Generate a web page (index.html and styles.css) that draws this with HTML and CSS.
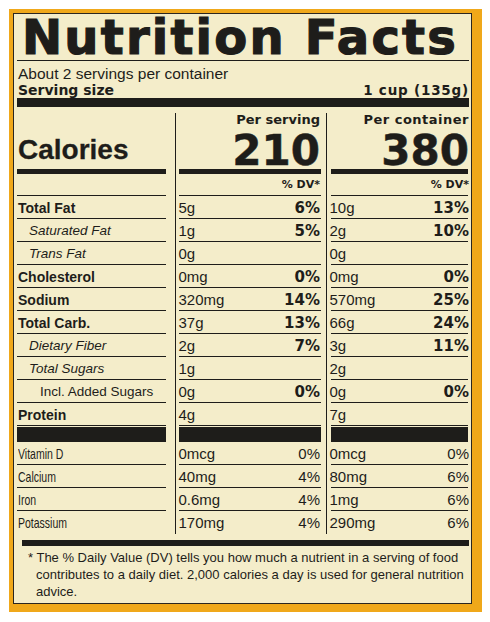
FILE: index.html
```html
<!DOCTYPE html>
<html lang="en">
<head>
    <meta charset="UTF-8">
    <meta name="viewport" content="width=device-width, initial-scale=1.0">
    <title>Nutrition Facts</title>
    <link rel="stylesheet" href="styles.css">
</head>
<body>
    <div class="bag">
        <div class="label">
            <h1 class="title">Nutrition Facts</h1>
            <p class="servings">About 2 servings per container</p>
            <div class="size-row">
                <b>Serving size</b>
                <b>1 cup (135g)</b>
            </div>
            <div class="bar-thick"></div>

            <div class="facts">
                <!-- header -->
                <div class="c l hd"><b class="cal">Calories</b></div>
                <div class="c m hd"><b class="per">Per serving</b><b class="kcal">210</b></div>
                <div class="c r hd"><b class="per">Per container</b><b class="kcal">380</b></div>

                <div class="c l"></div>
                <div class="c m dv"><b>% DV*</b></div>
                <div class="c r dv"><b>% DV*</b></div>

                <div class="c l"><b>Total Fat</b></div>
                <div class="c m"><span>5g</span><b>6%</b></div>
                <div class="c r"><span>10g</span><b>13%</b></div>

                <div class="c l sub"><i>Saturated Fat</i></div>
                <div class="c m"><span>1g</span><b>5%</b></div>
                <div class="c r"><span>2g</span><b>10%</b></div>

                <div class="c l sub"><i>Trans Fat</i></div>
                <div class="c m"><span>0g</span></div>
                <div class="c r"><span>0g</span></div>

                <div class="c l"><b>Cholesterol</b></div>
                <div class="c m"><span>0mg</span><b>0%</b></div>
                <div class="c r"><span>0mg</span><b>0%</b></div>

                <div class="c l"><b>Sodium</b></div>
                <div class="c m"><span>320mg</span><b>14%</b></div>
                <div class="c r"><span>570mg</span><b>25%</b></div>

                <div class="c l"><b>Total Carb.</b></div>
                <div class="c m"><span>37g</span><b>13%</b></div>
                <div class="c r"><span>66g</span><b>24%</b></div>

                <div class="c l sub"><i>Dietary Fiber</i></div>
                <div class="c m"><span>2g</span><b>7%</b></div>
                <div class="c r"><span>3g</span><b>11%</b></div>

                <div class="c l sub"><i>Total Sugars</i></div>
                <div class="c m"><span>1g</span></div>
                <div class="c r"><span>2g</span></div>

                <div class="c l sub2"><span>Incl. Added Sugars</span></div>
                <div class="c m"><span>0g</span><b>0%</b></div>
                <div class="c r"><span>0g</span><b>0%</b></div>

                <div class="c l"><b>Protein</b></div>
                <div class="c m"><span>4g</span></div>
                <div class="c r"><span>7g</span></div>

                <div class="c l bar"></div>
                <div class="c m bar"></div>
                <div class="c r bar"></div>

                <div class="c l"><span class="thin">Vitamin D</span></div>
                <div class="c m"><span>0mcg</span><span>0%</span></div>
                <div class="c r"><span>0mcg</span><span>0%</span></div>

                <div class="c l"><span class="thin">Calcium</span></div>
                <div class="c m"><span>40mg</span><span>4%</span></div>
                <div class="c r"><span>80mg</span><span>6%</span></div>

                <div class="c l"><span class="thin">Iron</span></div>
                <div class="c m"><span>0.6mg</span><span>4%</span></div>
                <div class="c r"><span>1mg</span><span>6%</span></div>

                <div class="c l last"><span class="thin">Potassium</span></div>
                <div class="c m last"><span>170mg</span><span>4%</span></div>
                <div class="c r last"><span>290mg</span><span>6%</span></div>
            </div>

            <div class="rule"></div>
            <p class="note">* The % Daily Value (DV) tells you how much a nutrient in a serving of food<br>contributes to a daily diet. 2,000 calories a day is used for general nutrition<br>advice.</p>
        </div>
    </div>
</body>
</html>
```

FILE: styles.css
```css
:root {
    --ink: #1e1d1a;
    --cream: #f4edca;
    --orange: #f0a81a;
}

* {
    margin: 0;
    padding: 0;
    box-sizing: border-box;
}

body {
    background-color: #fff;
    font-family: "Liberation Sans", Arial, sans-serif;
    color: var(--ink);
}

.bag {
    width: 473px;
    height: 603px;
    margin: 9px 0 0 9px;
    padding: 4px 10px 8px 4px;
    background-color: var(--orange);
}

.label {
    height: 100%;
    background-color: var(--cream);
    border: 1.5px solid #2a2620;
    padding: 0 2px 0 3px;
    display: flex;
    flex-direction: column;
}

.title {
    font-family: "DejaVu Sans", sans-serif;
    font-weight: bold;
    font-size: 48px;
    line-height: 46px;
    letter-spacing: 2.2px;
    -webkit-text-stroke: 1.2px var(--ink);
    padding-left: 5px;
    border-bottom: 1.5px solid var(--ink);
    white-space: nowrap;
}

.servings {
    font-size: 15.5px;
    line-height: 17px;
    margin-top: 4px;
    padding-left: 1px;
}

.size-row {
    display: flex;
    justify-content: space-between;
    line-height: 16px;
    padding-left: 1px;
    font-family: "DejaVu Sans", sans-serif;
    font-size: 14px;
}

.size-row b:last-child {
    font-size: 13.5px;
    letter-spacing: 0.8px;
}

.bar-thick {
    height: 9px;
    background-color: var(--ink);
}

/* table */
.facts {
    display: grid;
    grid-template-columns: 158px 151px 1fr;
    grid-template-rows: 61px 22px repeat(10, 23px) 16px repeat(4, 23px);
    margin-top: 6px;
}

.c {
    display: flex;
    justify-content: space-between;
    align-items: flex-end;
    padding-bottom: 2px;
    font-size: 15px;
    line-height: 18px;
    white-space: nowrap;
    background-image: linear-gradient(var(--ink), var(--ink));
    background-repeat: no-repeat;
    background-size: calc(100% - var(--w)) var(--t, 1.5px);
    background-position: var(--x) 100%;
}

.c b {
    font-family: "DejaVu Sans", sans-serif;
}

.l {
    --w: 9px;
    --x: 0px;
    padding-left: 1px;
    font-size: 14px;
}

.m {
    --w: 8px;
    --x: 3px;
    border-left: 1.5px solid var(--ink);
    padding: 0 6px 2px 2.5px;
}

.r {
    --w: 5px;
    --x: 4px;
    border-left: 1.5px solid var(--ink);
    padding: 0 0 2px 2.5px;
}

.l b {
    font-family: "Liberation Sans", Arial, sans-serif;
}

.sub {
    padding-left: 12px;
    font-size: 13.5px;
}

.sub2 {
    padding-left: 23px;
    font-size: 13.5px;
}

.thin {
    display: inline-block;
    font-size: 15px;
    transform: scaleX(0.7);
    transform-origin: left bottom;
}

.hd {
    --t: 5px;
    flex-direction: column;
    align-items: flex-end;
    justify-content: flex-start;
}

.l.hd {
    align-items: flex-start;
    justify-content: flex-end;
    padding-bottom: 8px;
}

.cal {
    font-family: "DejaVu Sans", sans-serif;
    font-size: 28px;
    line-height: 32px;
    -webkit-text-stroke: 0.3px var(--ink);
}

.per {
    font-size: 13px;
    line-height: 14px;
}

.r .per {
    letter-spacing: 0.5px;
}

.kcal {
    font-size: 42px;
    line-height: 40px;
    margin-top: 4px;
    -webkit-text-stroke: 0.5px var(--ink);
}

.dv {
    justify-content: flex-end;
}

.dv b {
    font-size: 11px;
}

.bar {
    --t: 15px;
}

.last {
    background-image: none;
}

.rule {
    height: 6px;
    margin: 6px 0 0 5px;
    background-color: var(--ink);
}

.note {
    font-size: 13px;
    line-height: 17px;
    padding: 3px 0 0 19px;
    text-indent: -8px;
    white-space: nowrap;
}
```
